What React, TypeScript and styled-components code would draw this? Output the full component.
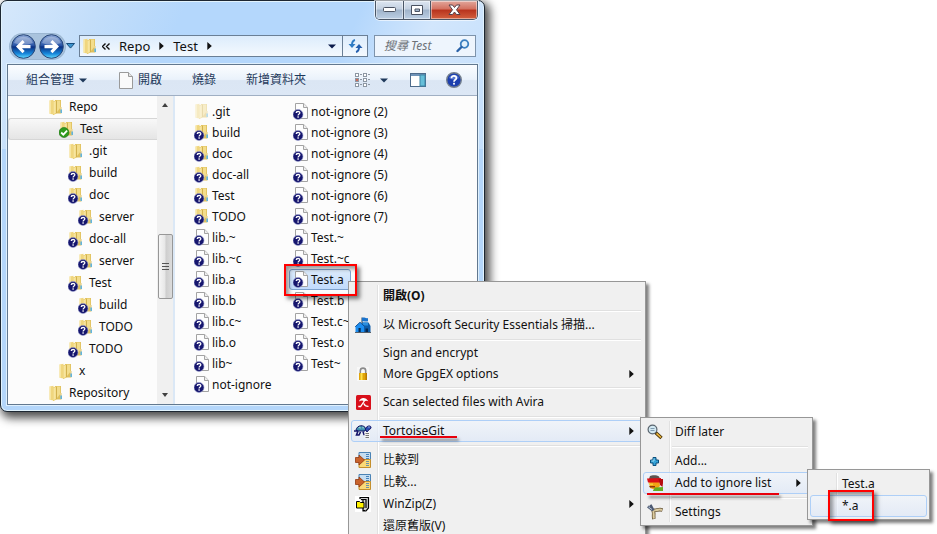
import React from "react";
import styled, { createGlobalStyle, css } from "styled-components";

const GlobalStyle = createGlobalStyle`
  *, *::before, *::after { box-sizing: border-box; }
  html, body { margin: 0; background: #fff; }
  body, button, input {
    font-family: "Noto Sans", "Noto Sans CJK TC", sans-serif;
    font-size: 12px;
    line-height: 16px;
    color: #111;
  }
  button { border: 0; padding: 0; background: none; text-align: left; }
  ul { list-style: none; margin: 0; padding: 0; }
`;

const Desktop = styled.main`
  position: relative;
  height: 100vh;
  overflow: hidden;
`;

/* ---------- explorer window ---------- */

const Window = styled.section`
  display: flex;
  flex-direction: column;
  width: 100%;
  max-width: 485px;
  padding: 0 6px 6px;
  border: 1px solid #1d2732;
  border-radius: 7px;
  background:
    linear-gradient(115deg, #d6e8fb 0, #c3defa 90px, #b4d7fc 170px, #b4d7fc 330px, #d2e6fc 400px, #c4dffc 100%) 0 0 / 100% 148px no-repeat,
    #b4d6fa;
  box-shadow: inset 0 0 0 1px #e2f3fd, 3px 4px 10px 2px rgba(0, 0, 0, 0.7);
`;

const TitleBar = styled.header`
  display: flex;
  justify-content: flex-end;
  height: 34px;
`;

const Captions = styled.div`
  display: flex;
  height: 19px;
  border: 1px solid #4a5666;
  border-top: 0;
  border-radius: 0 0 5px 5px;
  overflow: hidden;
  box-shadow: 0 0 0 1px rgba(255, 255, 255, 0.6);
`;

const CaptionButton = styled.button<{ $close?: boolean }>`
  display: grid;
  place-items: center;
  width: ${(p) => (p.$close ? 47 : 27)}px;
  background: ${(p) =>
    p.$close
      ? "linear-gradient(#e2a79c 0, #d3705f 45%, #b8331d 50%, #d3603f 100%)"
      : "linear-gradient(#dde6f1 0, #c3d0e0 45%, #9fb3ca 50%, #bccfe4 100%)"};
  box-shadow: inset 0 0 0 1px rgba(255, 255, 255, 0.45);
  & + & { border-left: 1px solid #4a5666; }
`;

const NavRow = styled.div`
  display: flex;
  align-items: center;
  height: 22px;
  margin-bottom: 7px;
  gap: 6px;
  padding-right: 2px;
`;

const History = styled.div`
  display: flex;
  align-items: center;
  gap: 1px;
  width: 66px;
  padding-left: 3px;
  flex: none;
`;

const NavPill = styled.div`
  display: flex;
  gap: 3px;
  padding: 0 1px;
  border-radius: 14px;
  background: #a9c3dd;
  box-shadow: 0 0 0 1px #9bb6d1;
`;

const RoundButton = styled.button`
  width: 25px;
  height: 25px;
  svg { display: block; }
`;

const CaretButton = styled.button`
  display: grid;
  place-items: center;
  width: 12px;
  height: 20px;
`;

const AddressBar = styled.div`
  display: flex;
  align-items: center;
  flex: 1;
  height: 22px;
  border: 1px solid #6a7f96;
  background: linear-gradient(#dcecfc, #f4f9fe);
`;

const Crumbs = styled.nav`
  display: flex;
  align-items: center;
  flex: 1;
  gap: 9px;
  padding: 0 4px 0 2px;
`;

const Crumb = styled.button`
  height: 20px;
  font-size: 13px;
  color: #111;
`;

const CrumbStart = styled.span`
  display: flex;
  align-items: center;
  gap: 4px;
`;

const RefreshButton = styled.button`
  display: grid;
  place-items: center;
  width: 25px;
  height: 20px;
  border-left: 1px solid #6a7f96;
`;

const SearchBox = styled.label`
  display: flex;
  align-items: center;
  width: 102px;
  height: 22px;
  padding: 0 5px 0 9px;
  border: 1px solid #7d93ab;
  background: #eef5fd;
`;

const SearchInput = styled.input`
  flex: 1;
  min-width: 0;
  padding: 0;
  border: 0;
  outline: 0;
  background: none;
  font-style: italic;
  &::placeholder { color: #6d7278; opacity: 1; }
`;

const Client = styled.div`
  border: 1px solid #62788f;
  background: #fcfcfc;
  box-shadow: 0 0 0 1px #dff0fd;
`;

const Toolbar = styled.div`
  display: flex;
  align-items: center;
  height: 31px;
  padding: 0 15px 0 18px;
  border-bottom: 1px solid #a0afc3;
  background: linear-gradient(#fbfdff 0, #eaf2fb 48%, #dbe6f4 52%, #dce7f5 100%);
`;

const ToolButton = styled.button<{ $after?: number }>`
  display: flex;
  align-items: center;
  gap: 5px;
  margin-right: ${(p) => p.$after ?? 0}px;
  color: #1e395b;
`;

const Spacer = styled.div`flex: 1;`;

const Panes = styled.div`
  display: grid;
  grid-template-columns: 149px 16px 1fr;
`;

const TreeItem = styled.button<{ $level: number; $active?: boolean }>`
  display: flex;
  align-items: center;
  gap: 5px;
  width: 100%;
  height: 22px;
  padding-left: ${(p) => 40 + p.$level * 10}px;
  color: #111;
  ${(p) =>
    p.$active &&
    css`
      border: 1px solid #d6d6d6;
      border-right: 0;
      border-radius: 3px 0 0 3px;
      background: linear-gradient(#f8f8f8, #e5e5e5);
    `}
`;

const ScrollTrack = styled.div`
  display: grid;
  grid-template-rows: 138px 65px 1fr;
  justify-items: center;
  background: #f0f0f0;
`;

const ScrollArrow = styled.span<{ $down?: boolean }>`
  align-self: ${(p) => (p.$down ? "end" : "start")};
  margin: 7px 0;
  border: 3px solid transparent;
  ${(p) => (p.$down ? "border-top: 4px solid #404040; border-bottom: 0;" : "border-bottom: 4px solid #404040; border-top: 0;")}
`;

const ScrollThumb = styled.div`
  display: grid;
  place-items: center;
  width: 15px;
  border: 1px solid #979797;
  border-radius: 2px;
  background: linear-gradient(90deg, #f6f6f6 0, #e6e6e6 48%, #cdcdcd 52%, #dcdcdc 100%);
`;

const Files = styled.ul`
  display: grid;
  grid-template-rows: repeat(14, 21px);
  grid-auto-flow: column;
  grid-template-columns: 99px 1fr;
  align-content: start;
  justify-items: start;
  padding: 5px 0 8px 15px;
  border-left: 2px solid #dbe8f6;
`;

const FileItem = styled.button<{ $selected?: boolean }>`
  display: flex;
  align-items: center;
  gap: 2px;
  height: 21px;
  padding: 0 6px 0 3px;
  color: #111;
  white-space: nowrap;
  border: 1px solid ${(p) => (p.$selected ? "#7da2ce" : "transparent")};
  border-radius: 3px;
  ${(p) => p.$selected && "background: linear-gradient(#dcebfc, #c1dbfc);"}
`;

/* ---------- menus ---------- */

const Menu = styled.div<{ $x: number; $y: number; $w: number }>`
  position: absolute;
  left: ${(p) => p.$x}px;
  top: ${(p) => p.$y}px;
  width: ${(p) => p.$w}px;
  padding: 3px 2px 2px;
  border: 1px solid #979797;
  background: linear-gradient(90deg, transparent 28px, #e1e1e1 28px, #e1e1e1 29px, #fff 29px, #fff 30px, transparent 30px) 0 3px / 100% calc(100% - 6px) no-repeat, #f0f0f0;
  box-shadow: 3px 3px 3px rgba(0, 0, 0, 0.5);
`;

const MenuItem = styled.button<{ $hot?: boolean; $bold?: boolean; $h?: number }>`
  display: grid;
  grid-template-columns: 22px 1fr 11px;
  column-gap: 9px;
  align-items: center;
  width: 100%;
  height: ${(p) => p.$h ?? 22}px;
  padding: 0 2px 0 0;
  border: 1px solid transparent;
  border-radius: 3px;
  font-weight: ${(p) => (p.$bold ? 700 : 400)};
  white-space: nowrap;
  color: #111;
  ${(p) => p.$hot && "border-color: #aecff7; background: linear-gradient(rgba(240,245,252,.7), rgba(222,232,248,.7));"}
`;

const MenuIcon = styled.span`
  display: grid;
  justify-items: center;
  svg { display: block; }
`;

const Separator = styled.hr`
  height: 7px;
  margin: 0 2px 0 29px;
  border: 0;
  background: linear-gradient(transparent 3px, #e0e0e0 3px, #e0e0e0 4px, #fff 4px, #fff 5px, transparent 5px);
`;

const RedBox = styled.div<{ $x: number; $y: number; $w: number; $h: number }>`
  position: absolute;
  left: ${(p) => p.$x}px;
  top: ${(p) => p.$y}px;
  width: ${(p) => p.$w}px;
  height: ${(p) => p.$h}px;
  border: 2px solid #f00;
  box-shadow: 3px 3px 4px rgba(0, 0, 0, 0.5), inset 3px 3px 4px rgba(0, 0, 0, 0.4);
  pointer-events: none;
`;

const RedLine = styled.div<{ $x: number; $y: number; $w: number }>`
  position: absolute;
  left: ${(p) => p.$x}px;
  top: ${(p) => p.$y}px;
  width: ${(p) => p.$w}px;
  height: 2px;
  background: #e8000c;
  box-shadow: 2px 3px 3px rgba(0, 0, 0, 0.5);
`;

/* ---------- icons ---------- */

type Badge = "none" | "unknown" | "ok";

const BadgeMark = ({ badge }: { badge: Badge }) => {
  if (badge === "unknown")
    return (
      <g>
        <circle cx="5" cy="11.500" r="5" fill="#16166e" stroke="#9a9fd0" strokeWidth=".6" />
        <path d="M3.200 10.100C3.200 7.900 7 8 6.800 10 6.700 11.100 5.100 11 5.100 12.500" fill="none" stroke="#fff" strokeWidth="1.300" />
        <rect x="4.400" y="13.300" width="1.400" height="1.400" fill="#fff" />
      </g>
    );
  if (badge === "ok")
    return (
      <g>
        <circle cx="5" cy="11.500" r="5" fill="#2f9a1d" stroke="#1d6d12" strokeWidth=".6" />
        <path d="M2.200 11.500l2.100 2.100 3.800-4" fill="none" stroke="#fff" strokeWidth="1.800" />
      </g>
    );
  return null;
};

const FolderIcon = ({ badge = "none", faded }: { badge?: Badge; faded?: boolean }) => (
  <svg width="16" height="17" viewBox="0 0 16 17" aria-hidden="true">
    <g opacity={faded ? 0.45 : 1}>
      <path d="M7 1h6v13.500H7z" fill="#dfc05c" />
      <path d="M9 1.500h3.200v7.500L9 13z" fill="#f3dd8c" />
      <path d="M1.500 1.500L5.500.8v14.700l-4-.8z" fill="#f0d67e" />
      <path d="M1.500 1.500h1.200v13.300l-1.200-.2z" fill="#f9ecb5" />
      <path d="M5 2.500L8.500 1v13.500L5.500 16H5z" fill="#e9ca68" />
      <path d="M5.400 3l2.400-1v12l-2.400 1.200z" fill="#f7e59f" />
      <path d="M8.500 2v12" stroke="#c9a746" strokeWidth=".7" />
      <path d="M12.300 8h1.500v6.500h-1.500z" fill="#ead9a0" />
      <path d="M12.500 10.500h1.300v3.500h-1.300z" fill="#3fa9e6" />
    </g>
    <BadgeMark badge={badge} />
  </svg>
);

const FileIcon = ({ badge = "unknown" }: { badge?: Badge }) => (
  <svg width="16" height="17" viewBox="0 0 16 17" aria-hidden="true">
    <path d="M2.500.5h8.200l3.800 3.800v11.200h-12z" fill="#fdfdfd" stroke="#a3a3a3" />
    <path d="M10.500.5v4h4" fill="#eee" stroke="#a3a3a3" />
    <BadgeMark badge={badge} />
  </svg>
);

const Arrow = ({ back }: { back?: boolean }) => (
  <svg width="25" height="25" viewBox="0 0 25 25" aria-hidden="true">
    <defs>
      <linearGradient id={back ? "orbBack" : "orbFwd"} x1="0" y1="0" x2="0" y2="1">
        <stop offset="0" stopColor="#8fa9d6" />
        <stop offset=".45" stopColor="#2a56a8" />
        <stop offset=".52" stopColor="#0a2f83" />
        <stop offset=".8" stopColor="#1787da" />
        <stop offset="1" stopColor="#63dcff" />
      </linearGradient>
    </defs>
    <circle cx="12.500" cy="12.500" r="11.800" fill={`url(#${back ? "orbBack" : "orbFwd"})`} stroke="#274678" />
    <path d="M3 9a10.300 10.300 0 0 1 19 0q-9.500 4-19 0z" fill="#fff" opacity=".3" />
    <path
      transform={back ? undefined : "translate(25 0) scale(-1 1)"}
      d="M5 12.500l6.500-6.500 2.200 2.200-2.700 2.700h8.500v3.400H11l2.700 2.700-2.200 2.200z"
      fill="#fff"
    />
  </svg>
);

const Down = ({ color = "#0a1a4a" }: { color?: string }) => (
  <svg width="8" height="5" viewBox="0 0 8 5" aria-hidden="true"><path d="M0 .5h8L4 4.600z" fill={color} /></svg>
);

const Right = () => (
  <svg width="5" height="8" viewBox="0 0 5 8" aria-hidden="true"><path d="M.3 0v8L4.800 4z" fill="#111" /></svg>
);

const Castle = () => (
  <svg width="16" height="16" viewBox="0 0 16 16" aria-hidden="true">
    <path d="M7 5.500h6.500L15.500 9v6H7z" fill="#0f5ca8" />
    <path d="M7.500 5.500h5.500v3H7.500z" fill="#2b8fe0" />
    <path d="M.5 9.500L5 5.500l4 3.500v6H.5z" fill="#1c8df0" />
    <path d="M.2 9.800L5 5.300l4.500 4" fill="none" stroke="#0c4f98" />
    <path d="M7 6V.5" stroke="#2b3f55" />
    <path d="M7 1c2-1.500 3.500.8 6 0v3.300c-2.500.9-4-.9-6 .2z" fill="#1a73cc" />
    <path d="M3.500 11h2.200v4H3.500zM10.500 11.500h2.500V15h-2.500z" fill="#06294f" />
    <path d="M0 15.500h16" stroke="#55606b" />
  </svg>
);

const Lock = () => (
  <svg width="12" height="16" viewBox="0 0 12 16" aria-hidden="true">
    <path d="M0 1h12v14H0z" fill="#f8f8f8" />
    <path d="M3.300 8V4.800a2.700 2.700 0 0 1 5.400 0V8" fill="none" stroke="#8b8b8b" strokeWidth="1.600" />
    <path d="M2 7h8v7H2z" fill="#e0a50b" />
    <path d="M3.500 7h2v7h-2z" fill="#ffe14a" />
    <path d="M8.500 7H10v7H8.500z" fill="#b87a00" />
  </svg>
);

const Avira = () => (
  <svg width="15" height="15" viewBox="0 0 15 15" aria-hidden="true">
    <rect width="15" height="15" rx="1.500" fill="#d8101b" />
    <path d="M3 6.500C4 2 10 1.500 12.300 6.300 10.500 5.300 9.300 5.600 8.300 6.600 7 5 5 5 3 6.500z" fill="#fff" />
    <path d="M8.300 6L4.600 11.500H2.300M7.800 8.500c.9 2.200 2.200 3.100 4.700 2.900" fill="none" stroke="#fff" strokeWidth="1.300" />
  </svg>
);

const Tortoise = () => (
  <svg width="18" height="16" viewBox="0 0 18 16" aria-hidden="true">
    <path d="M2 7C3 2 10 1 12 6l-1 2H3z" fill="#3f8fae" stroke="#101060" />
    <path d="M4 5l2-1.500 1 2zM8 3.500l2 1-1 1.500z" fill="#9bd8d0" />
    <path d="M0 8h4M4 8l-1.500 4H5l1.500-3M9 8.500l1 3h2" fill="none" stroke="#14146a" strokeWidth="1.600" />
    <path d="M11.500 6.500C12 2.500 17 2 17 4.500c0 2-3 2-4 4.500z" fill="#2d4fb5" stroke="#101060" />
    <path d="M14.500 4h1" stroke="#fff" />
    <path d="M10.500 9h5.500v6.500h-5.500z" fill="#f4f4f4" />
    <path d="M11.500 10.500H15M11.500 12.500H15M11.500 14.500H15" stroke="#777" />
  </svg>
);

const Compare = () => (
  <svg width="16" height="16" viewBox="0 0 16 16" aria-hidden="true">
    <path d="M4 .5h11.500v7H4z" fill="#c5ddf1" stroke="#4b83b5" />
    <path d="M4 7.500h11.500v8H4z" fill="#fbd978" stroke="#c48f2c" />
    <path d="M11 2.500h3M11 4.500h3M11 6.500h3" stroke="#4784bb" />
    <path d="M11 9.500h3M11 11.500h3M11 13.500h3" stroke="#6d93a8" />
    <path d="M.5 5.500H4V3l5.500 5L4 13v-2.500H.5z" fill="#c9632b" stroke="#93390f" strokeWidth=".8" />
  </svg>
);

const WinZip = () => (
  <svg width="16" height="16" viewBox="0 0 16 16" aria-hidden="true">
    <rect width="16" height="16" fill="#fff" />
    <path d="M5 3V1.500h8.500V12l-2.500 3H8V3.500h3V12" fill="#cfcfcf" stroke="#000" strokeWidth="1.200" />
    <path d="M1.500 5.500h3l1 1h3.500V12H1.500z" fill="#fff200" stroke="#000" />
    <path d="M6 3.500h2M8 14.500h2" stroke="#000" />
  </svg>
);

const Magnifier = () => (
  <svg width="16" height="16" viewBox="0 0 16 16" aria-hidden="true">
    <path d="M8.500 8.500l6 5.500" stroke="#4b3508" strokeWidth="3.400" />
    <path d="M9.500 9.300l4.500 4.200" stroke="#f0b83a" strokeWidth="1.700" />
    <circle cx="5.500" cy="5.500" r="4.400" fill="#d3e9f2" stroke="#59646e" strokeWidth="1.200" />
    <path d="M3.500 4.500h4M3.500 6.500h4" stroke="#7f9bb0" />
  </svg>
);

const Plus = () => (
  <svg width="14" height="16" viewBox="0 0 14 16" aria-hidden="true">
    <path d="M5 4.500h3v2.500h2.500v3H8v2.500H5V10H2.500V7H5z" fill="#35a3d8" stroke="#0c4f7c" />
    <path d="M6 5.500V8H3.500" stroke="#9bdcf5" fill="none" />
  </svg>
);

const IgnoreFace = () => (
  <svg width="16" height="16" viewBox="0 0 16 16" aria-hidden="true">
    <path d="M3 1C5-.2 10-.2 12 1.500L13 4H2z" fill="#5b5552" />
    <path d="M2 6h10l1 5-4 4-6-2z" fill="#f2a313" />
    <path d="M0 3.500L14 3v4.500H1z" fill="#d91016" />
    <path d="M11.500 4H16v4l-.5 4-2.500-2z" fill="#b50b10" />
    <path d="M1 8.500h5v1.500H3z" fill="#f6d33a" />
    <path d="M2 11h6v1.500H3z" fill="#8d3c08" />
    <path d="M6 15.500l2-3 8-.5V16H6z" fill="#63ad21" />
  </svg>
);

const Pliers = () => (
  <svg width="16" height="16" viewBox="0 0 16 16" aria-hidden="true">
    <path d="M5.500 6c2.500 2 .3 5 1.500 9M6 6c3 1.500 5-1.500 9.500 0" fill="none" stroke="#6d5c3f" strokeWidth="3.600" />
    <path d="M5.500 6c2.500 2 .3 5 1.500 8.500M6 6c3 1.500 5-1.500 9 0" fill="none" stroke="#dccb9f" strokeWidth="2" />
    <path d="M.8 2.500L6 6.500M3.500.8L6.500 6.500" stroke="#4d5a72" strokeWidth="2.400" />
    <path d="M1.500 3L5 5.500" stroke="#b9c8dd" />
  </svg>
);

/* ---------- data ---------- */

const tree: { name: string; level: number; badge: Badge; active?: boolean }[] = [
  { name: "Repo", level: 0, badge: "none" },
  { name: "Test", level: 1, badge: "ok", active: true },
  { name: ".git", level: 2, badge: "none" },
  { name: "build", level: 2, badge: "unknown" },
  { name: "doc", level: 2, badge: "unknown" },
  { name: "server", level: 3, badge: "unknown" },
  { name: "doc-all", level: 2, badge: "unknown" },
  { name: "server", level: 3, badge: "unknown" },
  { name: "Test", level: 2, badge: "unknown" },
  { name: "build", level: 3, badge: "unknown" },
  { name: "TODO", level: 3, badge: "unknown" },
  { name: "TODO", level: 2, badge: "unknown" },
  { name: "x", level: 1, badge: "none" },
  { name: "Repository", level: 0, badge: "none" },
];

const folders = [".git", "build", "doc", "doc-all", "Test", "TODO"];
const files = [
  "lib.~", "lib.~c", "lib.a", "lib.b", "lib.c~", "lib.o", "lib~", "not-ignore",
  "not-ignore (2)", "not-ignore (3)", "not-ignore (4)", "not-ignore (5)", "not-ignore (6)", "not-ignore (7)",
  "Test.~", "Test.~c", "Test.a", "Test.b", "Test.c~", "Test.o", "Test~",
];

type Entry = "-" | { label: string; icon?: React.ReactNode; more?: boolean; hot?: boolean; bold?: boolean; h?: number };

const contextMenu: Entry[] = [
  { label: "開啟(O)", bold: true },
  "-",
  { label: "以 Microsoft Security Essentials 掃描...", icon: <Castle /> },
  "-",
  { label: "Sign and encrypt", h: 20 },
  { label: "More GpgEX options", icon: <Lock />, more: true, h: 21 },
  "-",
  { label: "Scan selected files with Avira", icon: <Avira /> },
  "-",
  { label: "TortoiseGit", icon: <Tortoise />, more: true, hot: true },
  "-",
  { label: "比較到", icon: <Compare /> },
  { label: "比較...", icon: <Compare /> },
  { label: "WinZip(Z)", icon: <WinZip />, more: true },
  { label: "還原舊版(V)" },
];

const gitMenu: Entry[] = [
  { label: "Diff later", icon: <Magnifier /> },
  "-",
  { label: "Add...", icon: <Plus /> },
  { label: "Add to ignore list", icon: <IgnoreFace />, more: true, hot: true },
  "-",
  { label: "Settings", icon: <Pliers /> },
];

const ignoreMenu: Entry[] = [{ label: "Test.a" }, { label: "*.a", hot: true }];

const PopupMenu = ({ entries, x, y, w, label }: { entries: Entry[]; x: number; y: number; w: number; label: string }) => (
  <Menu role="menu" aria-label={label} $x={x} $y={y} $w={w}>
    {entries.map((e, i) =>
      e === "-" ? (
        <Separator key={i} />
      ) : (
        <MenuItem key={i} role="menuitem" $hot={e.hot} $bold={e.bold} $h={e.h}>
          <MenuIcon>{e.icon}</MenuIcon>
          <span>{e.label}</span>
          {e.more && <Right />}
        </MenuItem>
      )
    )}
  </Menu>
);

export default function App() {
  return (
    <Desktop>
      <GlobalStyle />
      <Window aria-label="Test">
        <TitleBar>
          <Captions>
            <CaptionButton aria-label="Minimize">
              <svg width="13" height="6"><rect x=".5" y=".5" width="12" height="4" rx="1" fill="#fff" stroke="#4a5261" /></svg>
            </CaptionButton>
            <CaptionButton aria-label="Maximize">
              <svg width="13" height="11"><path d="M.5.5h11v9H.5zM4 4v2.500h4.500V4z" fillRule="evenodd" fill="#fff" stroke="#4a5261" /></svg>
            </CaptionButton>
            <CaptionButton aria-label="Close" $close>
              <svg width="13" height="12" viewBox="0 0 13 12">
                <path d="M1 1h3.500l2 2.500 2-2.500H12L8.500 5.800 12 10.500H8.500l-2-2.500-2 2.500H1l3.500-4.700z" fill="#fff" stroke="#55404a" />
              </svg>
            </CaptionButton>
          </Captions>
        </TitleBar>

        <NavRow>
          <History>
            <NavPill>
              <RoundButton aria-label="Back"><Arrow back /></RoundButton>
              <RoundButton aria-label="Forward"><Arrow /></RoundButton>
            </NavPill>
            <CaretButton aria-label="Recent pages">
              <svg width="9" height="6" viewBox="0 0 9 6"><path d="M.5.5h8l-4 4.600z" fill="#3d95cf" stroke="#174d7d" /></svg>
            </CaretButton>
          </History>
          <AddressBar>
            <Crumbs aria-label="Address">
              <CrumbStart>
                <FolderIcon />
                <svg width="8" height="7" viewBox="0 0 8 7" aria-hidden="true">
                  <path d="M3.500.5l-3 3 3 3M7.500.5l-3 3 3 3" fill="none" stroke="#111" strokeWidth="1.400" />
                </svg>
              </CrumbStart>
              <Crumb>Repo</Crumb>
              <Right />
              <Crumb>Test</Crumb>
              <Right />
              <Spacer />
              <CaretButton aria-label="Previous locations"><Down /></CaretButton>
            </Crumbs>
            <RefreshButton aria-label="Refresh">
              <svg width="15" height="14" viewBox="0 0 15 14">
                <path d="M7 1C4.500 1.500 4 3 4 6" fill="none" stroke="#2f7cc4" strokeWidth="2" />
                <path d="M.5 5h7L4 9z" fill="#2f7cc4" />
                <path d="M8 13c2.500-.5 3-2 3-5" fill="none" stroke="#245fae" strokeWidth="2" />
                <path d="M7.500 9h7L11 5z" fill="#245fae" />
              </svg>
            </RefreshButton>
          </AddressBar>
          <SearchBox>
            <SearchInput aria-label="搜尋 Test" placeholder="搜尋 Test" />
            <svg width="14" height="14" viewBox="0 0 14 14" aria-hidden="true">
              <circle cx="8.500" cy="5" r="3.800" fill="#e3f1fb" stroke="#3b7fc0" strokeWidth="1.800" />
              <path d="M5.500 8L1.500 12" stroke="#2a62a8" strokeWidth="2.400" strokeLinecap="round" />
            </svg>
          </SearchBox>
        </NavRow>

        <Client>
          <Toolbar>
            <ToolButton $after={32}>組合管理 <Down color="#1e395b" /></ToolButton>
            <ToolButton $after={30}>
              <svg width="14" height="17" viewBox="0 0 14 17" aria-hidden="true">
                <path d="M.5.500h9l4 4v12H.5z" fill="#fafafa" stroke="#9a9a9a" />
                <path d="M9.500.5v4h4" fill="#e4e4e4" stroke="#9a9a9a" />
              </svg>
              開啟
            </ToolButton>
            <ToolButton $after={30}>燒錄</ToolButton>
            <ToolButton>新增資料夾</ToolButton>
            <Spacer />
            <ToolButton aria-label="View" $after={10}>
              <svg width="15" height="14" viewBox="0 0 15 14">
                {[0, 8].map((x) =>
                  [0, 5, 10].map((y) => (
                    <g key={`${x}-${y}`}>
                      <rect x={x + 0.5} y={y + 0.5} width="3" height="3" fill="#fff" stroke="#8d97a3" />
                      <path d={`M${x + 5} ${y + 1.5}h2`} stroke="#8d97a3" />
                    </g>
                  ))
                )}
                <rect x="1" y="6" width="2" height="2" fill="#d06a55" />
              </svg>
            </ToolButton>
            <ToolButton aria-label="More views" $after={22}><Down color="#1e395b" /></ToolButton>
            <ToolButton aria-label="Preview pane" $after={20}>
              <svg width="16" height="14" viewBox="0 0 16 14">
                <rect x=".5" y=".5" width="15" height="13" fill="#fff" stroke="#4d6b8c" />
                <path d="M1 2h14" stroke="#6f93b8" strokeWidth="2" />
                <rect x="10" y="2" width="5" height="11" fill="#66bfd9" stroke="#3c86a6" />
              </svg>
            </ToolButton>
            <ToolButton aria-label="Help">
              <svg width="16" height="16" viewBox="0 0 16 16">
                <circle cx="8" cy="8" r="7.300" fill="#1c3fae" stroke="#75808f" strokeWidth="1.400" />
                <path d="M3 6a5.500 5.500 0 0 1 10 0q-5 3-10 0z" fill="#7d9be6" opacity=".6" />
                <path d="M5.500 6.300C5.500 3 10.600 3.200 10.400 6.200 10.200 8 8 7.600 8 9.800" fill="none" stroke="#fff" strokeWidth="1.700" />
                <rect x="7.100" y="10.800" width="1.800" height="1.800" fill="#fff" />
              </svg>
            </ToolButton>
          </Toolbar>
          <Panes>
            <ul aria-label="Folders">
              {tree.map((t, i) => (
                <li key={i}>
                  <TreeItem $level={t.level} $active={t.active}>
                    <FolderIcon badge={t.badge} />
                    {t.name}
                  </TreeItem>
                </li>
              ))}
            </ul>
            <ScrollTrack>
              <ScrollArrow />
              <ScrollThumb>
                <svg width="7" height="8"><path d="M0 .5h7M0 3.500h7M0 6.500h7" stroke="#555" /></svg>
              </ScrollThumb>
              <ScrollArrow $down />
            </ScrollTrack>
            <Files aria-label="Files">
              {folders.map((f) => (
                <li key={f}>
                  <FileItem>
                    <FolderIcon badge={f === ".git" ? "none" : "unknown"} faded={f === ".git"} />
                    {f}
                  </FileItem>
                </li>
              ))}
              {files.map((f) => (
                <li key={f}>
                  <FileItem $selected={f === "Test.a"}>
                    <FileIcon />
                    {f}
                  </FileItem>
                </li>
              ))}
            </Files>
          </Panes>
        </Client>
      </Window>

      <PopupMenu label="Test.a" entries={contextMenu} x={348} y={281} w={298} />
      <RedBox $x={284} $y={264} $w={73} $h={32} />
      <RedLine $x={380} $y={436} $w={77} />
      <PopupMenu label="TortoiseGit" entries={gitMenu} x={640} y={417} w={173} />
      <RedLine $x={647} $y={493} $w={132} />
      <PopupMenu label="Add to ignore list" entries={ignoreMenu} x={807} y={469} w={123} />
      <RedBox $x={828} $y={490} $w={46} $h={31} />
    </Desktop>
  );
}
